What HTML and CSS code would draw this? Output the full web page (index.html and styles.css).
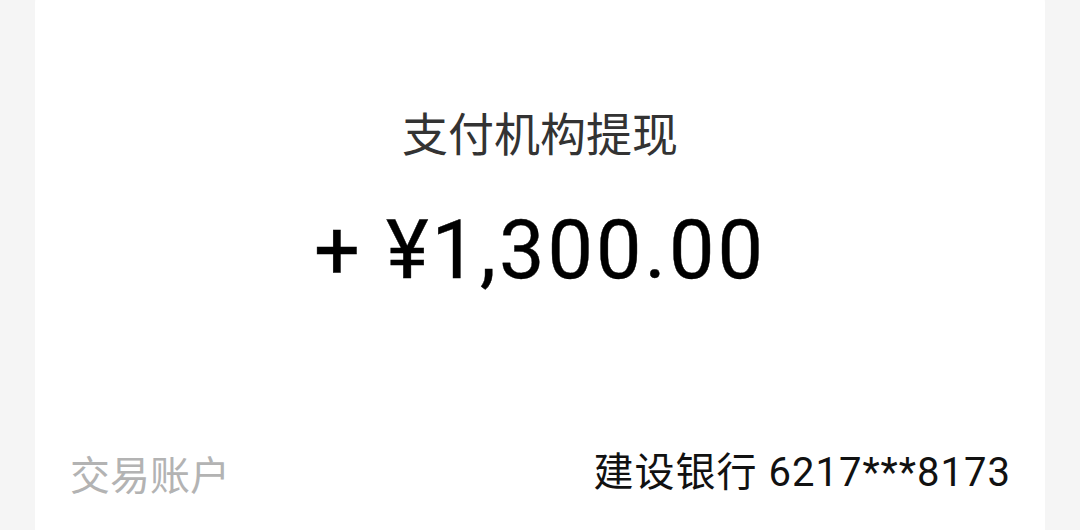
FILE: index.html
```html
<!DOCTYPE html>
<html lang="zh">
<head>
<meta charset="utf-8">
<link rel="stylesheet" href="styles.css">
</head>
<body>
<div class="card">
  <div class="title">支付机构提现</div>
  <div class="amount">+ ¥1,300.00</div>
  <div class="row">
    <span class="label">交易账户</span>
    <span class="value">建设银行 6217***8173</span>
  </div>
</div>
</body>
</html>
```
FILE: styles.css
```css
html, body {
  margin: 0;
  padding: 0;
  background: #f5f5f5;
  width: 1080px;
  height: 530px;
  overflow: hidden;
}
body {
  font-family: "Noto Sans CJK SC", Roboto, sans-serif;
}
.card {
  margin: -20px 35px 0 35px;
  background: #ffffff;
  border-radius: 24px 24px 0 0;
  height: 550px;
  box-sizing: border-box;
  padding-top: 123px;
}
.title {
  text-align: center;
  font-size: 46px;
  line-height: 56px;
  color: #333333;
}
.amount {
  margin-top: 44px;
  text-align: center;
  font-family: Roboto, sans-serif;
  font-weight: 400;
  font-size: 81px;
  letter-spacing: 3px;
  line-height: 96px;
  color: #000000;
  -webkit-text-stroke: 0.4px #000;
}
.row {
  margin-top: 149px;
  display: flex;
  justify-content: space-between;
  align-items: center;
  padding: 0 35px;
  font-size: 40px;
  line-height: 50px;
}
.label {
  color: #b3b3b3;
}
.value {
  color: #111111;
  font-family: Roboto, "Noto Sans CJK SC", sans-serif;
  letter-spacing: 1px;
  margin-right: -1px;
}
```
